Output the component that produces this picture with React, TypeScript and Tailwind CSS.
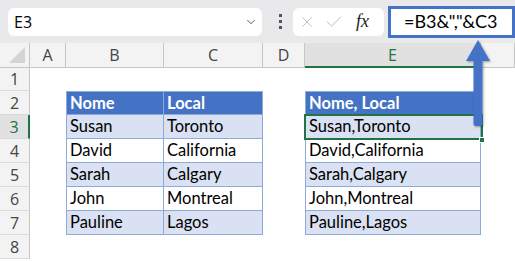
import { Check, ChevronDown, X } from "lucide-react";

const cols = ["A", "B", "C", "D", "E", ""];

const data = [
  ["Susan", "Toronto"],
  ["David", "California"],
  ["Sarah", "Calgary"],
  ["John", "Montreal"],
  ["Pauline", "Lagos"],
];

const cellFont = { fontFamily: "Lato, 'Liberation Sans', sans-serif" };
const uiFont = { fontFamily: "'Open Sans', 'Noto Sans', sans-serif" };

function TableCell({
  text,
  header,
  band,
  first,
  top,
}: {
  text: string;
  header?: boolean;
  band?: boolean;
  first?: boolean;
  top?: boolean;
}) {
  return (
    <div
      className={`flex items-center whitespace-nowrap border-b border-r border-[#8ea9db] pl-[3px] text-[16.5px] ${first ? "border-l" : ""} ${top ? "border-t" : ""} ${
        header ? "bg-[#4472c4] font-bold text-white" : band ? "bg-[#d9e1f2] text-black" : "bg-white text-black"
      }`}
      style={cellFont}
    >
      {text}
    </div>
  );
}

function RowHead({ n, active }: { n: number; active?: boolean }) {
  return (
    <div
      className={`flex items-center justify-center border-b border-[#dadada] text-[16px] ${
        active ? "border-r-2 border-r-[#217346] bg-[#e1e1e1] text-[#217346]" : "border-r border-r-[#c6c6c6] bg-[#f3f3f3] text-[#444]"
      }`}
      style={uiFont}
    >
      {n}
    </div>
  );
}

export default function App() {
  return (
    <div className="relative h-[261px] w-[515px] overflow-hidden bg-white">
      {/* formula bar */}
      <div className="flex h-[43px] items-center bg-[#e9e9eb] pl-[8px]">
        <div className="flex h-[28px] w-[254px] items-center justify-between rounded-[6px] bg-white pl-[6px] pr-[4px] text-[16px] text-black" style={uiFont}>
          <span>E3</span>
          <ChevronDown size={14} strokeWidth={1.5} className="text-[#444]" />
        </div>
        <div className="ml-[17px] flex flex-col gap-[3px]">
          <div className="size-[3px] bg-[#555]" />
          <div className="size-[3px] bg-[#555]" />
          <div className="size-[3px] bg-[#555]" />
        </div>
        <div className="ml-[11px] flex h-[28px] w-[91px] items-center rounded-[6px] bg-white pl-[5px]">
          <X size={18} strokeWidth={1.2} className="text-[#bdbdbd]" />
          <Check size={20} strokeWidth={1.2} className="ml-[8px] text-[#bdbdbd]" />
          <span className="ml-[12px] text-[18px] italic text-[#222]" style={{ fontFamily: "'Liberation Serif', serif" }}>
            fx
          </span>
        </div>
        <div
          className="ml-[4px] flex h-[32px] flex-1 items-center border-[3px] border-[#4472c4] bg-white pl-[13px] text-[18px] text-black"
          style={cellFont}
        >
          =B3&amp;","&amp;C3
        </div>
      </div>

      {/* sheet */}
      <div className="grid grid-cols-[30px_36px_98px_99px_42px_176px_1fr] grid-rows-[25px_23px_repeat(7,24px)]">
        <div className="relative border-b border-r border-[#c6c6c6] bg-[#f3f3f3]">
          <div className="absolute bottom-[4px] right-[4px] h-0 w-0 border-b-[16px] border-l-[16px] border-b-[#d4d4d4] border-l-transparent" />
        </div>
        {cols.map((c, i) => (
          <div
            key={i}
            className={`flex items-center justify-center text-[16px] ${
              c === "E"
                ? "border-b-2 border-r border-b-[#217346] border-r-[#c6c6c6] bg-[#e1e1e1] text-[#217346]"
                : "border-b border-r border-[#c6c6c6] bg-[#f3f3f3] text-[#444]"
            }`}
            style={uiFont}
          >
            {c}
          </div>
        ))}

        {/* row 1 */}
        <RowHead n={1} />
        {cols.map((c, i) => (
          <div key={i} />
        ))}

        {/* row 2 headers */}
        <RowHead n={2} />
        <div />
        <TableCell text="Nome" header first top />
        <TableCell text="Local" header top />
        <div />
        <TableCell text="Nome, Local" header first top />
        <div />

        {data.map(([name, place], i) => (
          <div key={name} className="contents">
            <RowHead n={i + 3} active={i === 0} />
            <div />
            <TableCell text={name} band={i % 2 === 0} first />
            <TableCell text={place} band={i % 2 === 0} />
            <div />
            <TableCell text={`${name},${place}`} band={i % 2 === 0} first />
            <div />
          </div>
        ))}

        <RowHead n={8} />
      </div>

      {/* selected cell E3 */}
      <div className="pointer-events-none absolute left-[304px] top-[114px] h-[26px] w-[179px] border-2 border-[#217346]" />
      <div className="absolute left-[479px] top-[137px] size-[6px] border border-white bg-[#217346]" />

      {/* arrow */}
      <svg className="absolute left-[460px] top-[36px]" width="36" height="96" viewBox="0 0 36 96">
        <defs>
          <filter id="sh" x="-50%" y="-20%" width="200%" height="140%">
            <feDropShadow dx="1" dy="1" stdDeviation="1.2" floodColor="#000" floodOpacity="0.35" />
          </filter>
        </defs>
        <g filter="url(#sh)" fill="#4472c4">
          <path d="M18 4 L30 25 L22.5 25 L22.5 88 Q22.5 90 20.5 90 L15.5 90 Q13.5 90 13.5 88 L13.5 25 L6 25 Z" />
        </g>
      </svg>
    </div>
  );
}
